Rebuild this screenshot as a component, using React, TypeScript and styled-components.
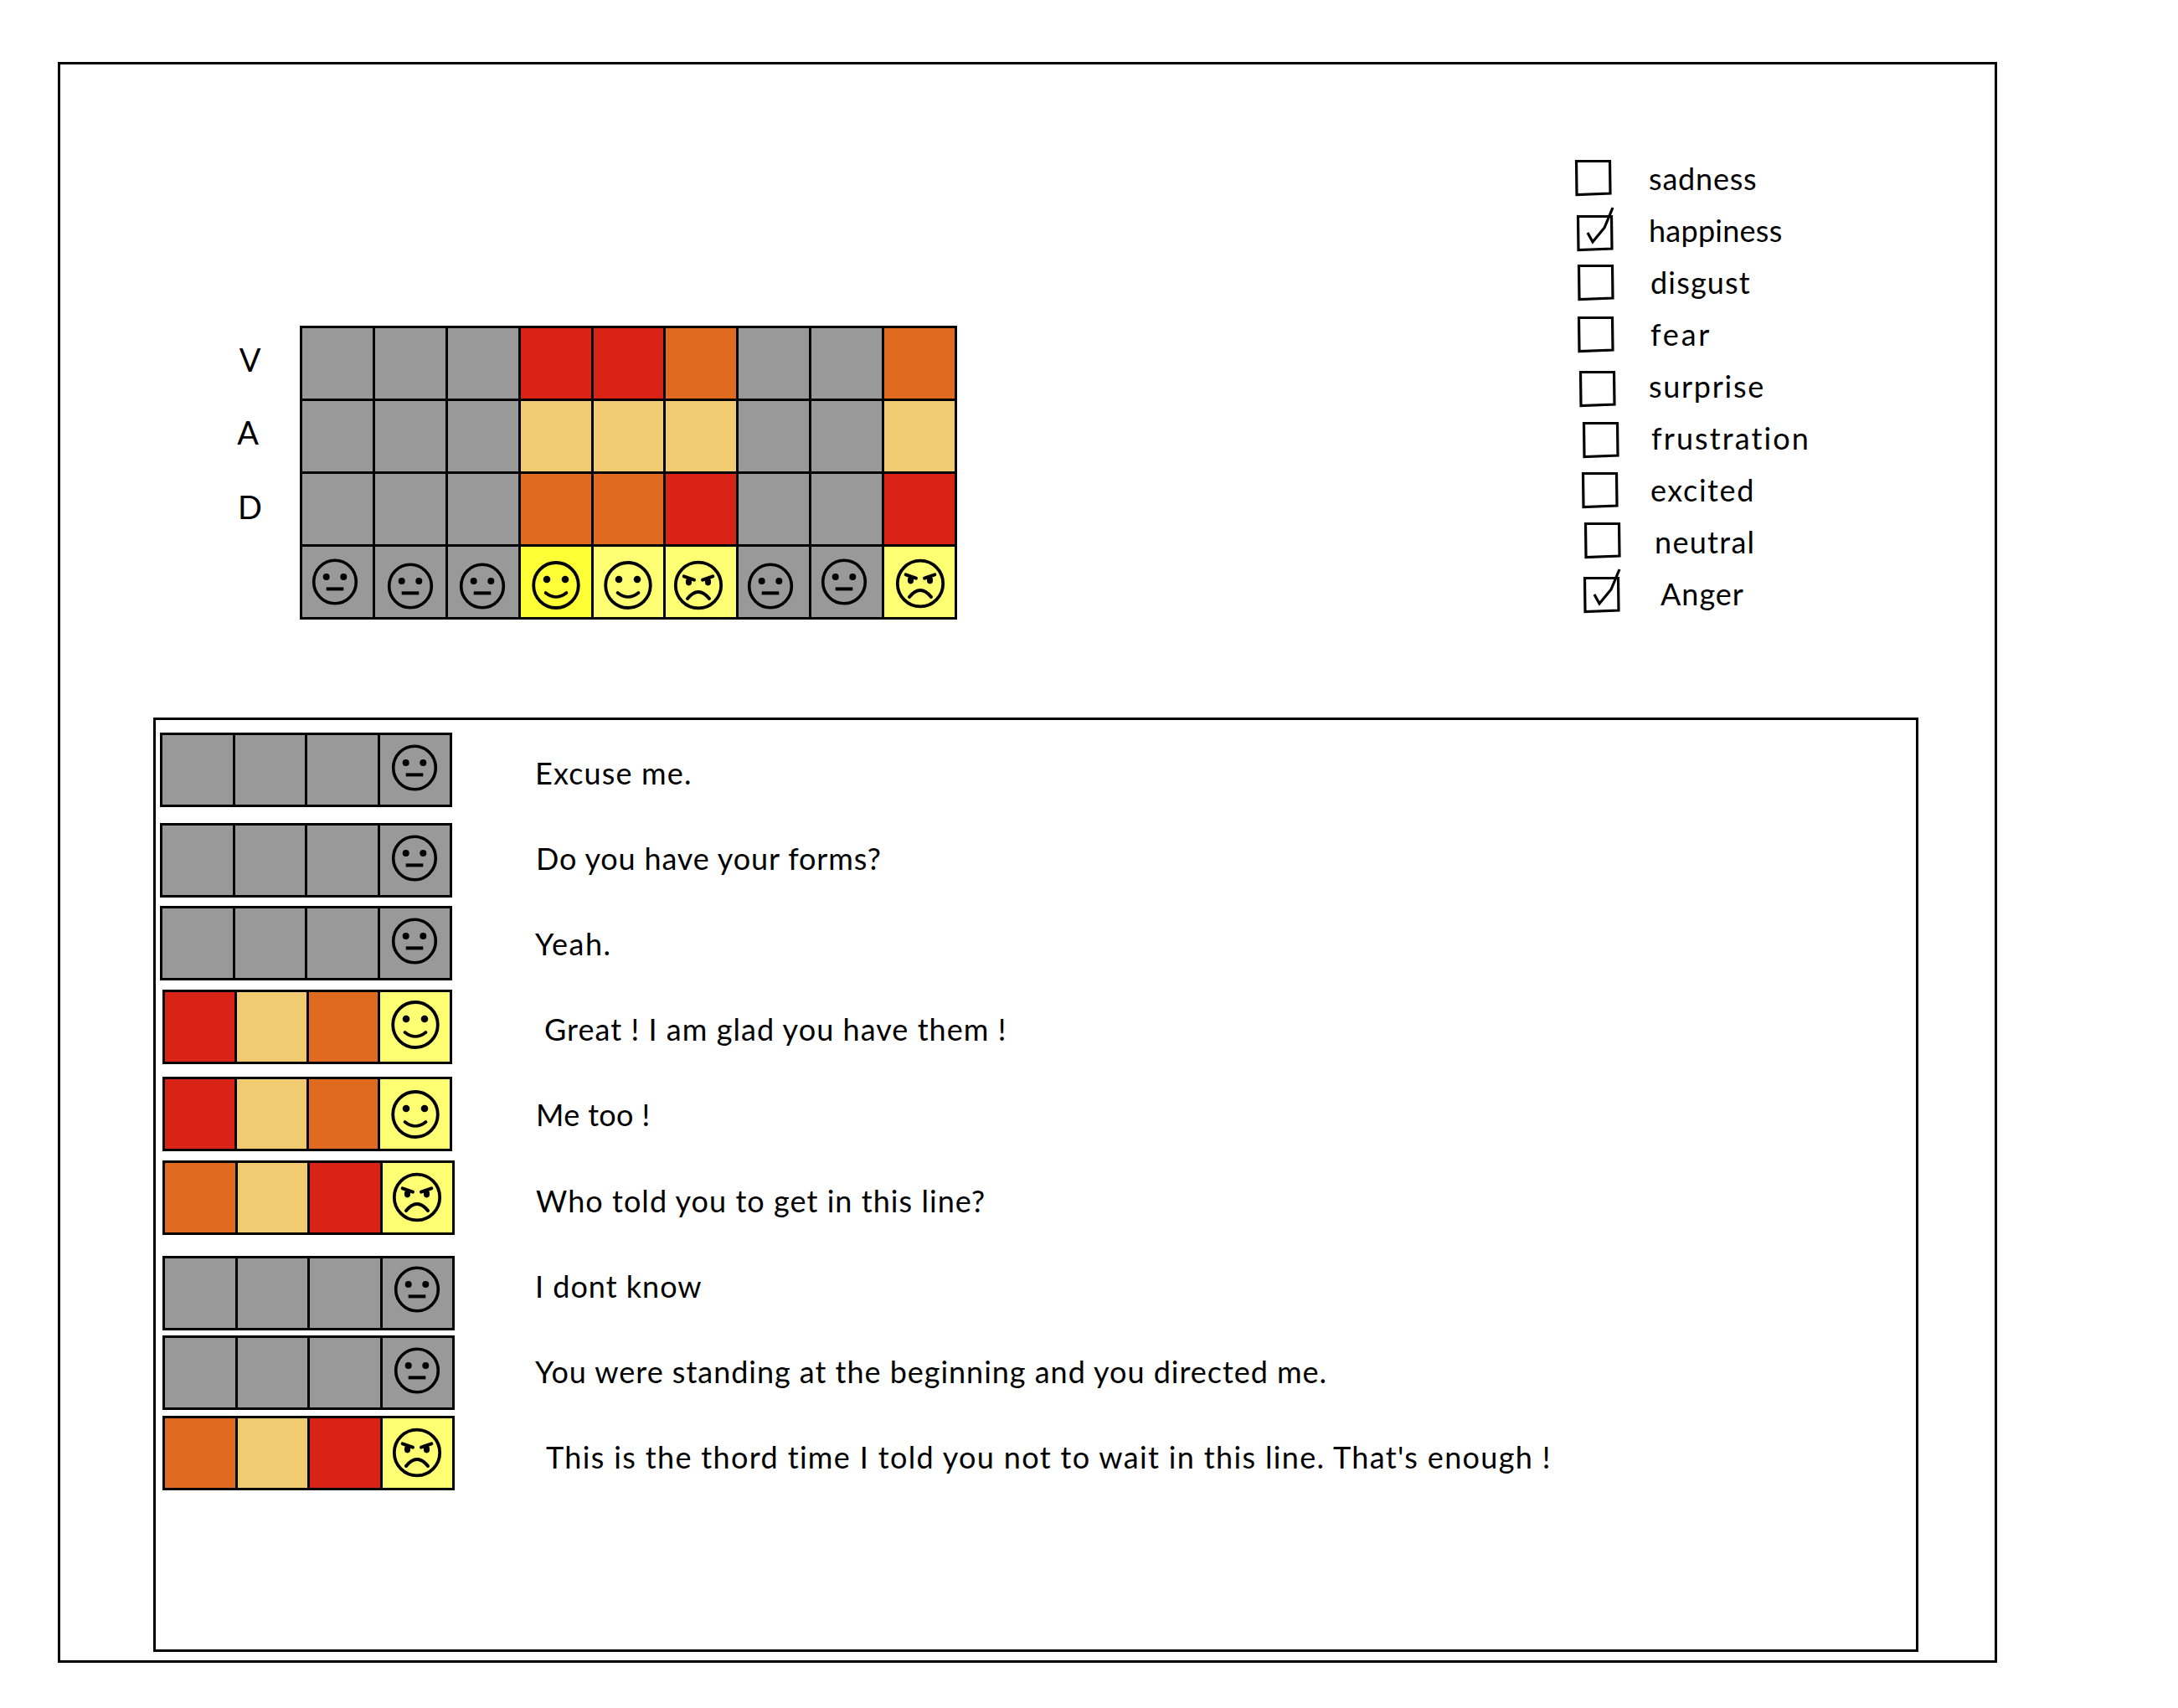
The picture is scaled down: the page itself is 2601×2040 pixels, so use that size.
import { createGlobalStyle, styled } from 'styled-components';

type Mood = 'neutral' | 'happy' | 'angry';

const GRAY = '#999999';
const RED = '#d92317';
const ORANGE = '#e06b20';
const SAND = '#f1cb72';
const YELLOW = '#ffff73';
const BRIGHT = '#ffff38';

const heatColumns: { v: string; a: string; d: string; mood: Mood; face: string; dx: number; dy: number }[] = [
  { v: GRAY, a: GRAY, d: GRAY, mood: 'neutral', face: GRAY, dx: -3, dy: 0 },
  { v: GRAY, a: GRAY, d: GRAY, mood: 'neutral', face: GRAY, dx: 0, dy: 10 },
  { v: GRAY, a: GRAY, d: GRAY, mood: 'neutral', face: GRAY, dx: -1, dy: 10 },
  { v: RED, a: SAND, d: ORANGE, mood: 'happy', face: BRIGHT, dx: 0, dy: 7 },
  { v: RED, a: SAND, d: ORANGE, mood: 'happy', face: YELLOW, dx: 0, dy: 7 },
  { v: ORANGE, a: SAND, d: RED, mood: 'angry', face: YELLOW, dx: -3, dy: 7 },
  { v: GRAY, a: GRAY, d: GRAY, mood: 'neutral', face: GRAY, dx: -4, dy: 10 },
  { v: GRAY, a: GRAY, d: GRAY, mood: 'neutral', face: GRAY, dx: -3, dy: 0 },
  { v: ORANGE, a: SAND, d: RED, mood: 'angry', face: YELLOW, dx: 1, dy: 3 },
];

const emotions = [
  { name: 'sadness', boxX: 1, boxY: -1, labelX: 0, spacing: 0.8, checked: false },
  { name: 'happiness', boxX: 3, boxY: 6, labelX: 0, spacing: 0.25, checked: true },
  { name: 'disgust', boxX: 4, boxY: 1, labelX: 2, spacing: 1.2, checked: false },
  { name: 'fear', boxX: 4, boxY: 1, labelX: 2, spacing: 2.8, checked: false },
  { name: 'surprise', boxX: 6, boxY: 6, labelX: 0, spacing: 1.7, checked: false },
  { name: 'frustration', boxX: 10, boxY: 4, labelX: 3, spacing: 2.1, checked: false },
  { name: 'excited', boxX: 9, boxY: 1, labelX: 2, spacing: 1.6, checked: false },
  { name: 'neutral', boxX: 12, boxY: -4, labelX: 7, spacing: 1.3, checked: false },
  { name: 'Anger', boxX: 11, boxY: 3, labelX: 14, spacing: 1, checked: true },
];

const neutralStrip = { colors: [GRAY, GRAY, GRAY], face: GRAY, mood: 'neutral' as Mood };
const happyStrip = { colors: [RED, SAND, ORANGE], face: YELLOW, mood: 'happy' as Mood };
const angryStrip = { colors: [ORANGE, SAND, RED], face: YELLOW, mood: 'angry' as Mood };

const strips = [
  { ...neutralStrip, top: 15, left: 5, width: 349, dy: -6 },
  { ...neutralStrip, top: 19, left: 5, width: 349, dy: -6 },
  { ...neutralStrip, top: 10, left: 5, width: 349, dy: -6 },
  { ...happyStrip, top: 11, left: 8, width: 346, dy: -6 },
  { ...happyStrip, top: 15, left: 8, width: 346, dy: 1 },
  { ...angryStrip, top: 11, left: 8, width: 349, dy: -2 },
  { ...neutralStrip, top: 25, left: 8, width: 349, dy: -9 },
  { ...neutralStrip, top: 6, left: 8, width: 349, dy: -6 },
  { ...angryStrip, top: 7, left: 8, width: 349, dy: -2 },
];

const lines = [
  { text: 'Excuse me.', x: 3, spacing: 1.15 },
  { text: 'Do you have your forms?', x: 4, spacing: 0.85 },
  { text: 'Yeah.', x: 3, spacing: 1.5 },
  { text: 'Great ! I am glad you have them !', x: 14, spacing: 1.05 },
  { text: 'Me too !', x: 4, spacing: 0.35 },
  { text: 'Who told you to get in this line?', x: 4, spacing: 1.05 },
  { text: 'I dont know', x: 3, spacing: 1 },
  { text: 'You were standing at the beginning and you directed me.', x: 3, spacing: 0.97 },
  { text: "This is the thord time I told you not to wait in this line. That's enough !", x: 16, spacing: 1.35 },
];

const GlobalStyle = createGlobalStyle`
  body {
    margin: 0;
    background: #fff;
    color: #000;
    font-family: Lato, "Open Sans", sans-serif;
  }
`;

const Page = styled.div`
  padding: 74px 0 0 69px;
  width: 2601px;
  height: 2040px;
  box-sizing: border-box;
`;

const Frame = styled.div`
  box-sizing: border-box;
  width: 2316px;
  height: 1912px;
  border: 3px solid #000;
`;

const TopRow = styled.div`
  display: flex;
  justify-content: space-between;
  align-items: flex-start;
  height: 780px;
  padding: 0 42px 0 186px;
  box-sizing: border-box;
`;

const HeatBlock = styled.div`
  display: flex;
  margin-top: 312px;
`;

const AxisColumn = styled.div`
  display: flex;
  flex-direction: column;
  width: 100px;
`;

const AxisLabel = styled.div<{ $dx: number; $dy: number }>`
  height: 87px;
  display: flex;
  align-items: center;
  justify-content: center;
  padding-right: ${(p) => 20 - p.$dx}px;
  padding-bottom: ${(p) => 6 - p.$dy}px;
  box-sizing: border-box;
  font-size: 38px;
`;

const HeatGrid = styled.div`
  display: grid;
  grid-template-columns: repeat(9, 1fr);
  grid-template-rows: repeat(4, 1fr);
  grid-auto-flow: column;
  gap: 3px;
  padding: 3px;
  width: 785px;
  height: 351px;
  box-sizing: border-box;
  background: #000;
`;

const Cell = styled.div<{ $color: string }>`
  background: ${(p) => p.$color};
`;

const FaceCell = styled.div<{ $color: string; $dx: number; $dy: number }>`
  background: ${(p) => p.$color};
  display: flex;
  align-items: center;
  justify-content: center;
  padding-left: ${(p) => Math.max(p.$dx, 0) * 2}px;
  padding-right: ${(p) => Math.max(-p.$dx, 0) * 2}px;
  padding-top: ${(p) => Math.max(p.$dy, 0)}px;
  padding-bottom: ${(p) => Math.max(-p.$dy, 0)}px;
  min-width: 0;
  min-height: 0;
  box-sizing: border-box;
`;

const FaceSvg = styled.svg`
  display: block;
  flex: none;
  overflow: visible;
`;

const Checklist = styled.ul`
  list-style: none;
  margin: 105px 0 0;
  padding: 0;
  width: 460px;
`;

const CheckRow = styled.li`
  display: grid;
  grid-template-columns: 89px 1fr;
  align-items: center;
  height: 62px;
`;

const BoxSvg = styled.svg<{ $x: number; $y: number }>`
  display: block;
  overflow: visible;
  margin-left: ${(p) => p.$x}px;
  margin-top: ${(p) => p.$y}px;
`;

const CheckLabel = styled.span<{ $x: number; $spacing: number }>`
  margin-left: ${(p) => p.$x}px;
  font-size: 36px;
  line-height: 1;
  letter-spacing: ${(p) => p.$spacing}px;
`;

const Panel = styled.div`
  display: flex;
  box-sizing: border-box;
  margin-left: 111px;
  width: 2108px;
  height: 1116px;
  border: 3px solid #000;
`;

const StripColumn = styled.div`
  flex: none;
  width: 450px;
`;

const Strip = styled.div<{ $top: number; $left: number; $width: number }>`
  display: grid;
  grid-template-columns: repeat(4, 1fr);
  gap: 3px;
  padding: 3px;
  box-sizing: border-box;
  margin: ${(p) => p.$top}px 0 0 ${(p) => p.$left}px;
  width: ${(p) => p.$width}px;
  height: 89px;
  background: #000;
`;

const LineColumn = styled.div`
  padding-top: 12px;
`;

const Line = styled.div<{ $x: number; $spacing: number }>`
  height: 102.1px;
  display: flex;
  align-items: center;
  margin-left: ${(p) => p.$x}px;
  font-size: 36px;
  letter-spacing: ${(p) => p.$spacing}px;
  white-space: pre;
`;

function Face({ mood }: { mood: Mood }) {
  if (mood === 'neutral') {
    return (
      <FaceSvg viewBox="-32 -32 64 64" width={64} height={64}>
        <ellipse cx="0" cy="0" rx="25.3" ry="25.8" fill="none" stroke="#000" strokeWidth="3.6" />
        <circle cx="-10.3" cy="-6" r="4" />
        <circle cx="10.3" cy="-6" r="4" />
        <rect x="-10.3" y="6.4" width="20.6" height="4" />
      </FaceSvg>
    );
  }
  if (mood === 'happy') {
    return (
      <FaceSvg viewBox="-32 -32 64 64" width={64} height={64}>
        <ellipse cx="0" cy="0" rx="26.8" ry="27" fill="none" stroke="#000" strokeWidth="3.8" />
        <circle cx="-11" cy="-7" r="4.3" />
        <circle cx="11" cy="-7" r="4.3" />
        <path d="M-12.5 9 Q0 19 12.5 9" fill="none" stroke="#000" strokeWidth="3.6" strokeLinecap="round" />
      </FaceSvg>
    );
  }
  return (
    <FaceSvg viewBox="-32 -32 64 64" width={64} height={64}>
      <ellipse cx="0" cy="0" rx="27.2" ry="27.4" fill="none" stroke="#000" strokeWidth="3.8" />
      <path d="M-17.3 -10.7 L-5 -6.3 M17.3 -10.7 L5 -6.3" stroke="#000" strokeWidth="4" strokeLinecap="round" />
      <ellipse cx="-11.5" cy="-4" rx="3.6" ry="4.4" />
      <ellipse cx="11.5" cy="-4" rx="3.6" ry="4.4" />
      <path d="M-13 16 Q0 0 13 16" fill="none" stroke="#000" strokeWidth="4" strokeLinecap="round" />
    </FaceSvg>
  );
}

function CheckBox({ checked, x, y }: { checked: boolean; x: number; y: number }) {
  return (
    <BoxSvg $x={x} $y={y} viewBox="0 0 43 43" width={43} height={43}>
      <path d="M1.5 1.5 L41.5 1.5 L42 40 L2 41.5 Z" fill="none" stroke="#000" strokeWidth="3.2" />
      {checked && (
        <path d="M13 21 L19 32 L33 15 L43 -9" fill="none" stroke="#000" strokeWidth="3.2" />
      )}
    </BoxSvg>
  );
}

export default function App() {
  return (
    <Page>
      <GlobalStyle />
      <Frame>
        <TopRow>
          <HeatBlock>
            <AxisColumn>
              <AxisLabel $dx={1} $dy={-1}>V</AxisLabel>
              <AxisLabel $dx={-4} $dy={-1}>A</AxisLabel>
              <AxisLabel $dx={1} $dy={2}>D</AxisLabel>
            </AxisColumn>
            <HeatGrid>
              {heatColumns.map((col, i) => [
                <Cell key={`v${i}`} $color={col.v} />,
                <Cell key={`a${i}`} $color={col.a} />,
                <Cell key={`d${i}`} $color={col.d} />,
                <FaceCell key={`f${i}`} $color={col.face} $dx={col.dx} $dy={col.dy}>
                  <Face mood={col.mood} />
                </FaceCell>,
              ])}
            </HeatGrid>
          </HeatBlock>
          <Checklist>
            {emotions.map((item) => (
              <CheckRow key={item.name}>
                <CheckBox checked={item.checked} x={item.boxX} y={item.boxY} />
                <CheckLabel $x={item.labelX} $spacing={item.spacing}>
                  {item.name}
                </CheckLabel>
              </CheckRow>
            ))}
          </Checklist>
        </TopRow>
        <Panel>
          <StripColumn>
            {strips.map((strip, i) => (
              <Strip key={i} $top={strip.top} $left={strip.left} $width={strip.width}>
                {strip.colors.map((color, j) => (
                  <Cell key={j} $color={color} />
                ))}
                <FaceCell $color={strip.face} $dx={0} $dy={strip.dy}>
                  <Face mood={strip.mood} />
                </FaceCell>
              </Strip>
            ))}
          </StripColumn>
          <LineColumn>
            {lines.map((line) => (
              <Line key={line.text} $x={line.x} $spacing={line.spacing}>
                {line.text}
              </Line>
            ))}
          </LineColumn>
        </Panel>
      </Frame>
    </Page>
  );
}
